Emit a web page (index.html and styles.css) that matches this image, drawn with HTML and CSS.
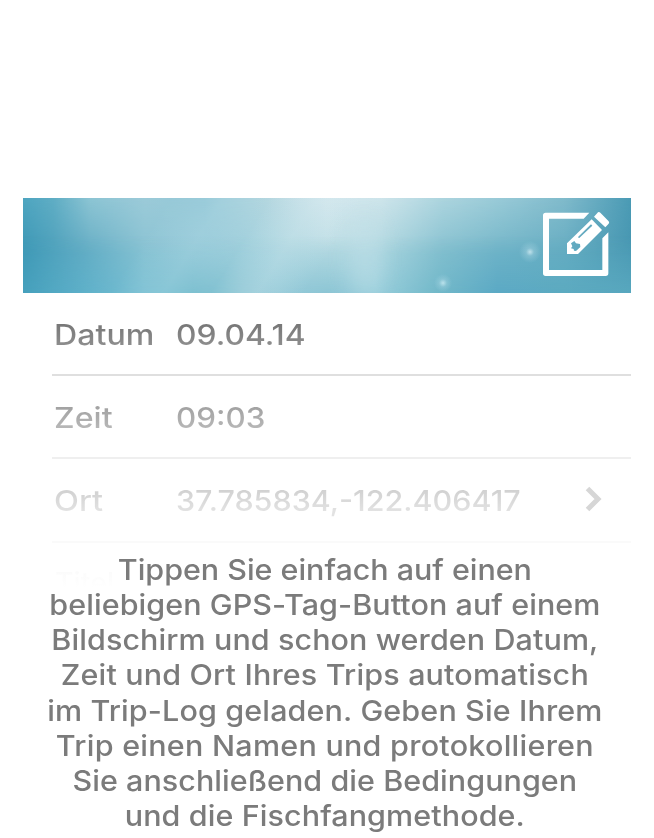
FILE: index.html
```html
<!DOCTYPE html>
<html lang="de">
<head>
<meta charset="utf-8">
<title>Trip-Log</title>
<link rel="stylesheet" href="styles.css">
</head>
<body>
<main class="page">
  <header class="banner">
    <div class="floor"></div>
    <div class="rays"></div>
    <svg class="edit" viewBox="36 33 204 198" aria-hidden="true">
      <path d="M178 38H47Q39 38 39 46V220Q39 228 47 228H227Q235 228 235 220V97L217 115V210H57V56H161Z"/>
      <path d="M204 37Q207 34 211 38L236 64Q239 68 236 71L226 82L192 50Z"/>
      <path fill-rule="evenodd" d="M185 58L216 90L144 162H111V130ZM123 130L127 139L123 145L131 147L132 152L138 153L151 141L150 132L138 130L133 123ZM183 73L144 111L147 115L187 77Z"/>
    </svg>
  </header>
  <section class="rows">
    <div class="row date"><span class="label">Datum</span><span class="value">09.04.14</span></div>
    <div class="row time"><span class="label">Zeit</span><span class="value">09:03</span></div>
    <div class="row place"><span class="label">Ort</span><span class="value">37.785834,-122.406417</span>
      <svg class="chevron" viewBox="0 0 18 26" aria-hidden="true"><path d="M2.5 2.5L13 13L2.5 23.5"/></svg>
    </div>
  </section>
  <div class="copy">
    <span class="next">Titel</span>
    <p class="text">
      <span class="line l1">Tippen Sie einfach auf einen</span>
      <span class="line l2">beliebigen GPS-Tag-Button auf einem</span>
      <span class="line l3">Bildschirm und schon werden Datum,</span>
      <span class="line l4">Zeit und Ort Ihres Trips automatisch</span>
      <span class="line l5">im Trip-Log geladen. Geben Sie Ihrem</span>
      <span class="line l6">Trip einen Namen und protokollieren</span>
      <span class="line l7">Sie anschließend die Bedingungen</span>
      <span class="line l8">und die Fischfangmethode.</span>
    </p>
  </div>
</main>
</body>
</html>
```
FILE: styles.css
```css
body {
  margin: 0;
  background: #fff;
  font-family: Inter, "Liberation Sans", sans-serif;
  font-size: 28.5px;
  font-weight: 500;
  color: #7b7b7b;
}
.page {
  box-sizing: border-box;
  width: 654px;
  height: 838px;
  padding: 198px 23px 0;
  overflow: hidden;
}
/* Water backdrop: a middle colour band, with top and bottom bands fading into it. */
.banner {
  position: relative;
  display: flex;
  justify-content: flex-end;
  box-sizing: border-box;
  height: 95px;
  padding: 13px 21px 0 0;
  overflow: hidden;
  background:
    linear-gradient(90deg, #3c97b5, #61abc3 10%, #8ac3d3 20%, #98cbda 30%, #a9d5e0 40%, #bddee5 50%, #aed7e0 59%, #86c1d0 69%, #72b5c8 79%, #66adc2 89%, #4797b2);
}
.banner::before, .floor, .rays {
  content: "";
  position: absolute;
  inset: 0;
}
.banner::before {
  background: linear-gradient(90deg, #4ea5c0, #5fadc4 5%, #8cc4d3 11%, #9bcad8 20%, #93c7d6 30%, #b3d6df 40%, #d3e7ed 50%, #cde4ea 59%, #acd4de 69%, #97c9d6 79%, #80bacb 89%, #4a9ab4);
  -webkit-mask-image: linear-gradient(#000, transparent 60%);
  mask-image: linear-gradient(#000, transparent 60%);
}
.floor {
  background: linear-gradient(90deg, #46a0bc, #5eb0c9 10%, #79bfd2 20%, #78bdce 28%, #8fc7d5 36%, #94cad8 42%, #8cc5d4 50%, #98cedb 58%, #72b8c9 68%, #5ba9c4 78%, #5caac0 89%, #58a7be);
  -webkit-mask-image: linear-gradient(transparent 40%, #000);
  mask-image: linear-gradient(transparent 40%, #000);
}
.rays {
  background:
    radial-gradient(circle at 507px 54px, rgba(220,242,248,.75) 0, rgba(190,225,236,.3) 4px, transparent 11px),
    radial-gradient(circle at 420px 85px, rgba(210,240,247,.75) 0, rgba(180,220,232,.3) 4px, transparent 9px),
    linear-gradient(122deg, transparent 22%, rgba(190,225,235,.22) 30%, transparent 37%, transparent 37%, rgba(210,232,238,.28) 44%, transparent 51%);
}
.rays::before {
  content: "";
  position: absolute;
  left: 325px;
  top: 20px;
  width: 34px;
  height: 80px;
  background: rgba(200,228,235,.4);
  border-radius: 50%;
  filter: blur(10px);
}
.edit {
  position: relative;
  z-index: 1;
  width: 68px;
  height: 66px;
  fill: #fff;
}
.rows {
  margin-left: 29px;
}
.row {
  display: grid;
  grid-template-columns: 122px auto 1fr;
  align-items: center;
  justify-items: start;
  box-sizing: border-box;
  height: 83.5px;
  padding: 2px 0 0 2px;
  border-bottom: 2px solid;
}
.date { height: 82.5px; border-color: #dfdfdf; }
.time { border-color: #efefef; }
.place { border-color: #fafafa; }
.label, .value {
  color: transparent;
  background-clip: text;
  -webkit-background-clip: text;
  transform-origin: left;
}
.date span { background-image: linear-gradient(#777 20%, #8d8d8d 80%); }
.time span { background-image: linear-gradient(#a2a2a2 20%, #b7b7b7 80%); }
.place span { background-image: linear-gradient(#d1d1d1 20%, #e2e2e2 80%); }
.date .label { transform: scaleX(1.128); }
.date .value { transform: scaleX(1.115); }
.time .label { transform: scaleX(1.13); }
.time .value { transform: scaleX(1.1); }
.place .label { transform: scaleX(1.14); }
.place .value { transform: scaleX(1.07); }
.chevron {
  justify-self: end;
  width: 18px;
  height: 26px;
  margin: -3px 28px 0 0;
  fill: none;
  stroke: #d6d6d6;
  stroke-width: 5;
}
.copy {
  position: relative;
  padding-top: 9px;
}
.next {
  position: absolute;
  left: 32px;
  top: 22px;
  color: transparent;
  background: linear-gradient(#fbfbfb 20%, #fff 65%);
  -webkit-background-clip: text;
  background-clip: text;
}
.text {
  position: relative;
  display: flex;
  flex-direction: column;
  align-items: center;
  margin: 0;
  padding-right: 4px;
  line-height: 35.25px;
  white-space: nowrap;
  transform: scaleX(1.07);
}
.l1 { letter-spacing: -.03px; }
.l2 { letter-spacing: .06px; }
.l3 { letter-spacing: .08px; }
.l4 { letter-spacing: .15px; }
.l5 { letter-spacing: .12px; }
.l6 { letter-spacing: .24px; }
.l7 { letter-spacing: .04px; }
.l8 { letter-spacing: .08px; }
```
